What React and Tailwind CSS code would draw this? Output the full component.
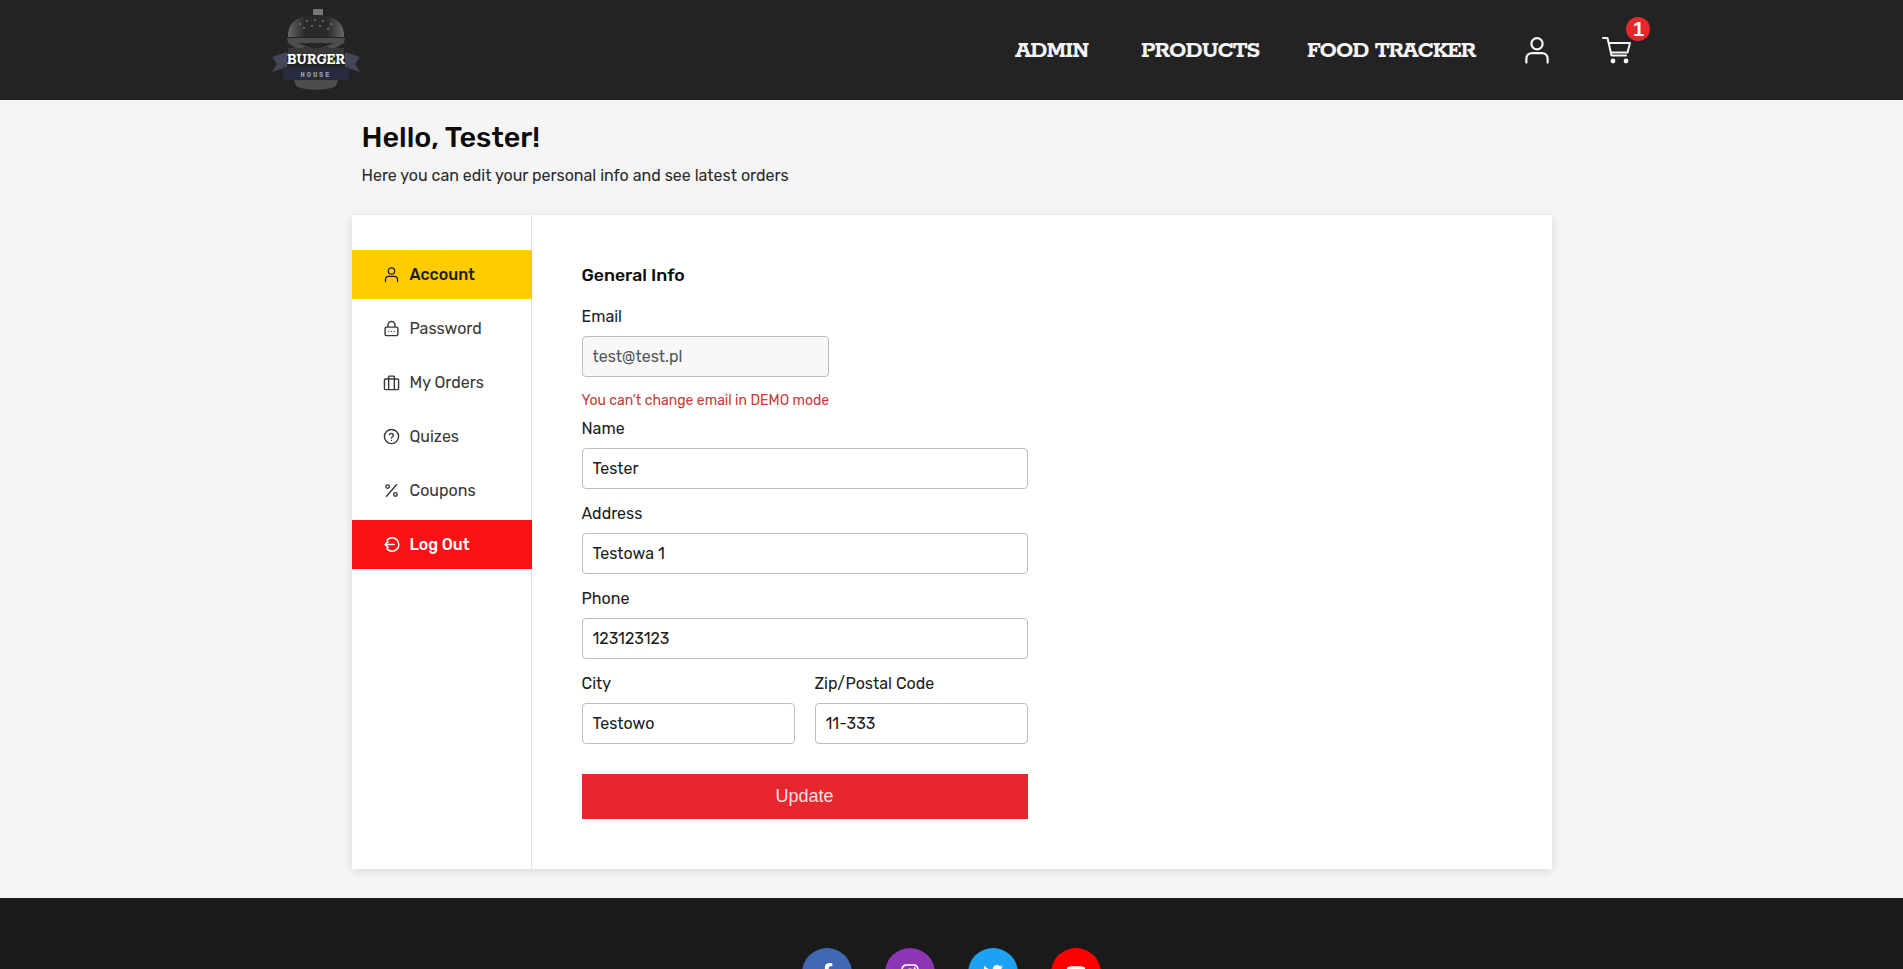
import { FaFacebookF, FaInstagram, FaTwitter, FaYoutube } from 'react-icons/fa'

const UserIcon = ({ className }) => (
  <svg viewBox="0 0 24 24" fill="none" stroke="currentColor" strokeWidth="1.800" strokeLinecap="round" className={className}>
    <circle cx="12" cy="7" r="4.500" />
    <path d="M3.500 22v-3c0-2.800 2-4.500 4.500-4.500h8c2.500 0 4.500 1.700 4.500 4.500v3" />
  </svg>
)

const LockIcon = ({ className }) => (
  <svg viewBox="0 0 24 24" fill="none" stroke="currentColor" strokeWidth="2" strokeLinejoin="round" className={className}>
    <rect x="3" y="10" width="18" height="12" rx="1.500" />
    <path d="M7 10V7a5 5 0 0 1 10 0v3" />
    <path d="M8 16h.01M12 16h.01M16 16h.01" strokeLinecap="round" />
  </svg>
)

const BagIcon = ({ className }) => (
  <svg viewBox="0 0 24 24" fill="none" stroke="currentColor" strokeWidth="2" strokeLinejoin="round" className={className}>
    <rect x="2" y="7" width="20" height="15" rx="1.500" />
    <path d="M8 22V4a1 1 0 0 1 1-1h6a1 1 0 0 1 1 1v18" />
  </svg>
)

const HelpIcon = ({ className }) => (
  <svg viewBox="0 0 24 24" fill="none" stroke="currentColor" strokeWidth="2" strokeLinecap="round" className={className}>
    <circle cx="12" cy="12" r="10" />
    <path d="M9.200 9.500a2.900 2.900 0 0 1 5.600.8c0 1.900-2.800 2.300-2.800 3.900" />
    <path d="M12 17.500h.01" />
  </svg>
)

const PercentIcon = ({ className }) => (
  <svg viewBox="0 0 24 24" fill="none" stroke="currentColor" strokeWidth="2" strokeLinecap="round" className={className}>
    <path d="M19 4 5 20" />
    <circle cx="6.500" cy="6.500" r="2.500" />
    <circle cx="17.500" cy="17.500" r="2.500" />
  </svg>
)

const LogoutIcon = ({ className }) => (
  <svg viewBox="0 0 24 24" fill="none" stroke="currentColor" strokeWidth="2.200" strokeLinecap="round" strokeLinejoin="round" className={className}>
    <path d="M5.500 6a9.500 9.500 0 1 1 0 12" />
    <path d="M16 12H3M7 8l-4 4 4 4" />
  </svg>
)

const CartIcon = ({ className }) => (
  <svg viewBox="0 0 30 28" fill="none" stroke="currentColor" strokeWidth="2" strokeLinecap="round" strokeLinejoin="round" className={className}>
    <path d="M1 2h4.500l4 17.500h14.500" />
    <path d="M7 7h21l-2.500 9.500H9" />
    <circle cx="11" cy="25" r="1.400" fill="currentColor" />
    <circle cx="24" cy="25" r="1.400" fill="currentColor" />
  </svg>
)

const BurgerLogo = () => (
  <svg viewBox="0 0 88 82" className="w-[88px] h-[82px]">
    <defs>
      <linearGradient id="bun" x1="0" x2="1" y1="0" y2="0">
        <stop offset="0" stopColor="#666666" />
        <stop offset="0.3" stopColor="#2a2a2a" />
        <stop offset="0.7" stopColor="#2a2a2a" />
        <stop offset="1" stopColor="#666666" />
      </linearGradient>
    </defs>
    <rect x="41" y="0" width="10" height="7" rx="1" fill="#777777" />
    <path d="M16 28c-1-15 11-22 28-22s29 7 28 22z" fill="url(#bun)" />
    <g fill="#777777">
      <circle cx="28" cy="15" r="1" /><circle cx="35" cy="12" r="1" /><circle cx="43" cy="11" r="1" />
      <circle cx="51" cy="12" r="1" /><circle cx="59" cy="15" r="1" /><circle cx="32" cy="19" r="1" />
      <circle cx="40" cy="17" r="1" /><circle cx="48" cy="17" r="1" /><circle cx="56" cy="20" r="1" />
    </g>
    <path d="M15 29h58l-1 5-10 6-8-2-10 5-10-5-9 2-9-6z" fill="#4d4d4d" />
    <path d="M26 34h36l-18 7z" fill="#262626" />
    <path d="M16 39h56v8H16z" fill="#383838" />
    <path d="M0 48l15-5v15l-15 5 5-8z" fill="#46465a" />
    <path d="M88 48l-15-5v15l15 5-5-8z" fill="#46465a" />
    <path d="M11 58h66v13H11z" fill="#2a2a3e" />
    <path d="M22 71h44l-2 6c-8 5-32 5-40 0z" fill="#4d4d4d" />
    <text x="44" y="55" textAnchor="middle" fill="#ffffff" fontSize="17" fontWeight="700" fontFamily="'Rokkitt','DejaVu Serif',serif" textLength="58" lengthAdjust="spacingAndGlyphs">BURGER</text>
    <text x="44" y="68" textAnchor="middle" fill="#a8a8b8" fontSize="7" fontWeight="700" fontFamily="'Liberation Mono',monospace" letterSpacing="2">HOUSE</text>
  </svg>
)

const menuItems = [
  { label: 'Account', Icon: UserIcon, classes: 'bg-[#ffcc00] text-[#1c1c1c] font-medium' },
  { label: 'Password', Icon: LockIcon, classes: 'text-[#383838]' },
  { label: 'My Orders', Icon: BagIcon, classes: 'text-[#383838]' },
  { label: 'Quizes', Icon: HelpIcon, classes: 'text-[#383838]' },
  { label: 'Coupons', Icon: PercentIcon, classes: 'text-[#383838]' },
  { label: 'Log Out', Icon: LogoutIcon, classes: 'bg-[#fb1015] text-white font-medium' },
]

const Field = ({ label, value, className = '', disabled = false }) => (
  <label className={`block ${className}`}>
    <span className="block h-[20px] leading-[21px] text-[16px] text-[#1c1c1c]">{label}</span>
    <input
      readOnly
      value={value}
      className={`mt-[10px] block w-full h-[41px] px-[10px] rounded-[4px] border border-[#bdbdbd] text-[16px] outline-none ${disabled ? 'bg-[#f8f8f8] text-[#555555]' : 'bg-white text-[#1c1c1c]'}`}
    />
  </label>
)

const socials = [
  { color: 'bg-[#4267b2]', name: 'facebook', Icon: FaFacebookF },
  { color: 'bg-[#8e35b5]', name: 'instagram', Icon: FaInstagram },
  { color: 'bg-[#1da1f2]', name: 'twitter', Icon: FaTwitter },
  { color: 'bg-[#ff0000]', name: 'youtube', Icon: FaYoutube },
]

export default function App() {
  return (
    <div className="min-h-screen bg-[#f5f5f5] font-['Rubik','Inter','Noto_Sans',sans-serif]">
      <header className="h-[100px] bg-[#232323] flex items-center justify-between pl-[272px] pr-[271px]">
        <BurgerLogo />
        <nav className="flex items-center text-[#f4f4f4] font-['Rokkitt','DejaVu_Serif',serif] font-bold text-[24px] tracking-[-1px]">
          <a className="mt-[2px] w-[76px] whitespace-nowrap">ADMIN</a>
          <a className="mt-[2px] ml-[50px] w-[116px] whitespace-nowrap">PRODUCTS</a>
          <a className="mt-[2px] ml-[50px] w-[165px] whitespace-nowrap">FOOD TRACKER</a>
          <UserIcon className="ml-[50px] w-[30px] h-[30px]" />
          <div className="relative ml-[50px]">
            <CartIcon className="w-[30px] h-[28px]" />
            <span className="absolute -top-[19px] left-[24px] w-[24px] h-[24px] rounded-full bg-[#e8262d] text-white text-[20px] font-bold font-['Liberation_Sans',sans-serif] flex items-center justify-center">1</span>
          </div>
        </nav>
      </header>

      <main className="w-[1200px] mx-auto pb-[29px]">
        <div className="pl-[10px] pt-[20px]">
          <h1 className="text-[28.8px] leading-[35px] font-medium text-[#0c0c0c]">Hello, Tester!</h1>
          <p className="mt-[11px] h-[19px] text-[16px] leading-[20px] text-[#2b2b2b]">Here you can edit your personal info and see latest orders</p>
        </div>

        <div className="mt-[30px] h-[654px] bg-white flex shadow-[0_2px_10px_rgba(0,0,0,0.12)]">
          <aside className="w-[180px] shrink-0 border-r border-[#e2e2e2] pt-[35px] flex flex-col gap-[5px]">
            {menuItems.map(({ label, Icon, classes }) => (
              <a key={label} className={`-mr-px h-[49px] flex items-center pl-[31px] text-[16px] ${classes}`}>
                <Icon className="w-[17px] h-[17px] mr-[10px]" />
                {label}
              </a>
            ))}
          </aside>

          <form className="w-[446px] ml-[50px] pt-[50px]">
            <h2 className="text-[17.6px] leading-[21px] h-[20px] font-medium text-[#0c0c0c]">General Info</h2>
            <Field className="mt-[21px] w-[247px]" label="Email" value="test@test.pl" disabled />
            <p className="mt-[13px] text-[14px] leading-[21px] h-[20px] text-[#c43b3b] whitespace-nowrap">You can't change email in DEMO mode</p>
            <Field className="mt-[8px]" label="Name" value="Tester" />
            <Field className="mt-[14px]" label="Address" value="Testowa 1" />
            <Field className="mt-[14px]" label="Phone" value="123123123" />
            <div className="mt-[14px] grid grid-cols-2 gap-[20px]">
              <Field label="City" value="Testowo" />
              <Field label="Zip/Postal Code" value="11-333" />
            </div>
            <button type="button" className="mt-[30px] w-full h-[45px] bg-[#e8262d] text-[#f8e0e0] text-[18px] font-['Liberation_Sans',sans-serif]">Update</button>
          </form>
        </div>
      </main>

      <footer className="bg-[#1a1a1a] pt-[50px] pb-[50px] flex justify-center gap-[33px]">
        {socials.map(({ name, color, Icon }) => (
          <a key={name} aria-label={name} className={`w-[50px] h-[50px] rounded-full flex items-center justify-center text-white text-[20px] ${color}`}>
            <Icon />
          </a>
        ))}
      </footer>
    </div>
  )
}
